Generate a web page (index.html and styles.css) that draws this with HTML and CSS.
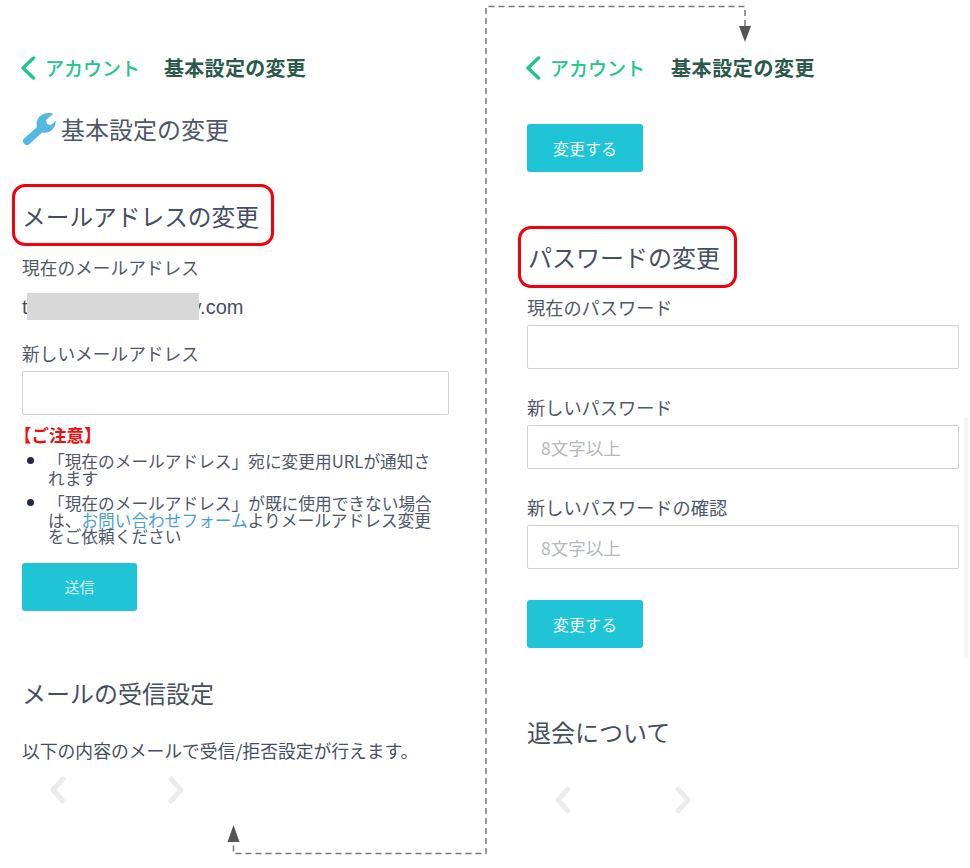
FILE: index.html
```html
<!DOCTYPE html>
<html lang="ja">
<head>
<meta charset="utf-8">
<title>基本設定の変更</title>
<link rel="stylesheet" href="styles.css">
</head>
<body>
<main class="page">
  <section class="panel panel-left">
    <header class="topbar">
      <a class="back">
        <svg class="back-icon" viewBox="0 0 16 24"><path d="M13.5 2 L3 12 L13.5 22"/></svg>
        <span>アカウント</span>
      </a>
      <span class="topbar-title">基本設定の変更</span>
    </header>
    <h1 class="page-title">
      <svg class="wrench" viewBox="0 0 34 34"><path d="M1.500 27 L15 15 C13 8 18 1 27 1 C29 1 30 1.300 31 2 L24 8 L25 12 L29 13 L33.500 8.500 C34.500 16 28 22 20 20.500 L7 32.500 C4 35 -1 30 1.500 27 Z"/></svg>
      <span>基本設定の変更</span>
    </h1>
    <h2 class="section-title boxed boxed-mail">メールアドレスの変更</h2>
    <p class="label label-current">現在のメールアドレス</p>
    <p class="email">t<span class="mask"></span><span class="email-tail">y.com</span></p>
    <label class="label label-new">新しいメールアドレス</label>
    <input class="field field-left" type="text">
    <p class="notice">【ご注意】</p>
    <ul class="notes">
      <li>「現在のメールアドレス」宛に変更用URLが通知されます</li>
      <li>「現在のメールアドレス」が既に使用できない場合は、<a class="link">お問い合わせフォーム</a>よりメールアドレス変更をご依頼ください</li>
    </ul>
    <button class="btn btn-send">送信</button>
    <h2 class="section-title title-receive">メールの受信設定</h2>
    <p class="desc">以下の内容のメールで受信/拒否設定が行えます。</p>
    <div class="pager pager-left">
      <svg class="chev" viewBox="0 0 20 30"><path d="M15 4 L5 15 L15 26"/></svg>
      <svg class="chev" viewBox="0 0 20 30"><path d="M5 4 L15 15 L5 26"/></svg>
    </div>
  </section>
  <section class="panel panel-right">
    <header class="topbar">
      <a class="back">
        <svg class="back-icon" viewBox="0 0 16 24"><path d="M13.5 2 L3 12 L13.5 22"/></svg>
        <span>アカウント</span>
      </a>
      <span class="topbar-title">基本設定の変更</span>
    </header>
    <button class="btn btn-change btn-top">変更する</button>
    <h2 class="section-title boxed boxed-pass">パスワードの変更</h2>
    <label class="label label-pass1">現在のパスワード</label>
    <input class="field" type="password">
    <label class="label label-pass">新しいパスワード</label>
    <input class="field" type="text" placeholder="8文字以上">
    <label class="label label-pass">新しいパスワードの確認</label>
    <input class="field" type="text" placeholder="8文字以上">
    <button class="btn btn-change btn-bottom">変更する</button>
    <h2 class="section-title title-leave">退会について</h2>
    <div class="pager pager-right">
      <svg class="chev" viewBox="0 0 20 30"><path d="M15 4 L5 15 L15 26"/></svg>
      <svg class="chev" viewBox="0 0 20 30"><path d="M5 4 L15 15 L5 26"/></svg>
    </div>
  </section>
  <svg class="flow-arrow" viewBox="0 0 970 868" aria-hidden="true">
    <path class="flow-line" d="M745 26 V6.500 H486 V853.500 H233.500 V840"/>
    <path class="flow-head" d="M739 26 H751 L745 42 Z"/>
    <path class="flow-head" d="M227.500 842 H239.500 L233.500 825 Z"/>
  </svg>
  <div class="scroll-thumb"></div>
</main>
</body>
</html>
```
FILE: styles.css
```css
* { box-sizing: border-box; }
html, body { margin: 0; padding: 0; background: #fff; }
body {
  font-family: "Noto Sans CJK JP", "Liberation Sans", sans-serif;
  color: #454f63;
  overflow: hidden;
}
.page { position: relative; display: flex; width: 970px; height: 868px; overflow: hidden; }
.panel { display: flex; flex-direction: column; align-items: flex-start; }
.panel-left { width: 505px; padding: 52px 0 0 22px; }
.panel-right { width: 465px; padding: 52px 0 0 22px; }
.panel-right .field { width: 432px; margin-top: 5px; }
.panel-right .label { font-size: 18.200px; }

.topbar { display: flex; align-items: center; height: 32px; }
.back { display: flex; align-items: center; color: #20c78b; font-size: 19px; line-height: 32px; font-weight: 500; }
.back-icon { width: 16px; height: 24px; margin: 0 9px 0 -2px; fill: none; stroke: #20c78b; stroke-width: 3.500; stroke-linecap: round; stroke-linejoin: round; }
.topbar-title { margin-left: 24px; color: #2b5a4c; font-size: 20px; line-height: 32px; font-weight: 700; letter-spacing: 0.3px; }
.panel-right .topbar-title { margin-left: 26px; letter-spacing: 0.6px; }

.page-title { display: flex; align-items: center; margin: 28px 0 0; height: 34px; font-size: 24px; line-height: 34px; font-weight: 400; color: #4e5868; }
.wrench { width: 34px; height: 34px; margin-right: 5px; fill: #55b7e3; }

.section-title { margin: 0; font-size: 24px; line-height: 34px; font-weight: 400; color: #454f63; }
.boxed { border: 3px solid #f2000e; border-radius: 13px; }
.boxed-mail { width: 262px; height: 62px; margin: 38px 0 0 -10px; padding: 12px 0 0 7px; font-size: 23.700px; }
.boxed-pass { width: 219px; height: 62px; margin: 54px 0 0 -9px; padding: 11px 0 0 7px; }
.title-receive { margin-top: 65px; }
.title-leave { margin-top: 67px; }

.label { display: block; margin: 0; font-size: 17.700px; line-height: 26px; color: #4e5868; }
.label-current { margin-top: 8px; }
.label-new { margin-top: 19px; }
.label-pass1 { margin-top: 6px; }
.label-pass { margin-top: 25px; }

.email { margin: 13px 0 0; height: 28px; font-family: "Liberation Sans", sans-serif; font-size: 20px; line-height: 28px; color: #454f63; white-space: nowrap; }
.mask { position: relative; z-index: 1; display: inline-block; width: 172px; height: 27px; vertical-align: top; margin-left: -1px; background: #d8d8d8; }
.email-tail { margin-left: -7px; }

.field { display: block; width: 427px; height: 44px; margin: 5px 0 0; padding: 0 13px; border: 1px solid #d2d2d2; border-radius: 2px; background: #fff; font-family: inherit; font-size: 17.500px; color: #454f63; outline: none; }
.field-left { height: 44px; }
.field::placeholder { color: #b4b8bf; opacity: 1; }

.notice { margin: 9px 0 0 -8px; font-size: 17.500px; line-height: 22px; font-weight: 700; color: #f40b0b; }
.notes { margin: 7px 0 0; padding: 0 0 0 26px; width: 412px; font-size: 16.700px; line-height: 16.500px; list-style: none; color: #4e5868; }
.notes li { position: relative; margin-bottom: 9px; }
.notes li::before { content: ""; position: absolute; left: -21px; top: 4px; width: 7px; height: 7px; border-radius: 50%; background: #1f2a44; }
.link { display: inline-block; color: #4a9fd2; }

.btn { display: block; border: 0; border-radius: 3px; background: #1fc4d6; font-family: inherit; padding: 0; }
.btn-send { width: 115px; height: 48px; margin-top: 9px; color: #cdf1f5; font-size: 15px; }
.btn-change { width: 116px; height: 48px; color: #eefbfc; font-size: 16px; }
.btn-top { margin: 40px 0 0 0; }
.btn-bottom { margin-top: 31px; }

.desc { margin: 28px 0 0; font-size: 17.800px; line-height: 24px; color: #454f63; }

.pager { display: flex; }
.pager-left { margin: 13px 0 0 26px; gap: 98px; }
.pager-right { margin: 36px 0 0 26px; gap: 100px; }
.chev { width: 20px; height: 30px; fill: none; stroke: #ececec; stroke-width: 5; stroke-linecap: round; stroke-linejoin: round; }

.flow-arrow { position: absolute; left: 0; top: 0; width: 970px; height: 868px; pointer-events: none; }
.flow-line { fill: none; stroke: #777; stroke-width: 1.500; stroke-dasharray: 6 4; }
.flow-head { fill: #555; }
.scroll-thumb { position: absolute; left: 964px; top: 417px; width: 4px; height: 240px; border-radius: 2px; background: #f5f5f5; }
```
